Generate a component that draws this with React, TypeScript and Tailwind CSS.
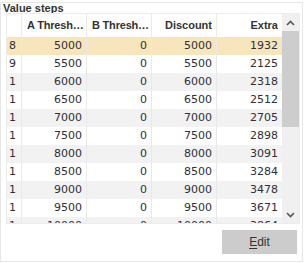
import React from "react"

const rows: [number, number, number, number, number][] = [
  [8, 5000, 0, 5000, 1932],
  [9, 5500, 0, 5500, 2125],
  [10, 6000, 0, 6000, 2318],
  [11, 6500, 0, 6500, 2512],
  [12, 7000, 0, 7000, 2705],
  [13, 7500, 0, 7500, 2898],
  [14, 8000, 0, 8000, 3091],
  [15, 8500, 0, 8500, 3284],
  [16, 9000, 0, 9000, 3478],
  [17, 9500, 0, 9500, 3671],
  [18, 10000, 0, 10000, 3864],
]

function Chevron({ up }: { up?: boolean }) {
  return (
    <svg width="9" height="6" viewBox="0 0 9 6" className="block">
      <path
        d={up ? "M1 5 L4.5 1.5 L8 5" : "M1 1 L4.5 4.5 L8 1"}
        fill="none"
        stroke="#555"
        strokeWidth="1.6"
      />
    </svg>
  )
}

export default function App() {
  return (
    <div className="w-[306px] h-[263px] bg-white pt-[2px] text-[#333] font-['Liberation_Sans',Arial,sans-serif]">
      <div className="w-[303px] h-[260px] border border-[#e6e6e6] flex flex-col">
        <div className="h-[10px] pl-[2px] text-[11px] leading-[11px] font-bold whitespace-nowrap">
          Value steps
        </div>

        <div className="ml-[5px] w-[294px] h-[211px] border border-[#ececec] flex overflow-hidden">
          <div className="w-[275px] h-full overflow-hidden">
            <div className="flex h-[23px] text-[11px] font-bold items-center">
              <div className="w-[15px] h-full border-r border-[#ebebeb]" />
              {["A Threshold", "B Threshold", "Discount", "Extra"].map((h, i) => (
                <div
                  key={h}
                  className={
                    "w-[65px] h-full flex items-center overflow-hidden " +
                    (i < 3 ? "border-r border-[#ebebeb] " : "") +
                    (i < 2 ? "pl-[5px] pr-[1px] tracking-[-0.2px]" : "justify-end pr-[4px]")
                  }
                >
                  <span className="truncate">{h}</span>
                </div>
              ))}
            </div>
            {rows.map((r, idx) => (
              <div
                key={idx}
                className={
                  "flex h-[18px] items-center text-[11px] font-['DejaVu_Sans',sans-serif] text-[#2e2e3a] " +
                  (idx === 0 ? "bg-[#f9e5bb]" : idx % 2 === 0 ? "bg-[#f2f2f2]" : "bg-white")
                }
              >
                <div className="w-[15px] h-full border-r border-[#e9e9e9] pl-[2px] flex items-center">
                  <span className="w-[7px] overflow-hidden whitespace-nowrap block">{r[0]}</span>
                </div>
                {r.slice(1).map((v, i) => (
                  <div
                    key={i}
                    className={
                      "w-[65px] h-full flex items-center justify-end pr-[4px] " +
                      (i < 3 ? "border-r border-[#e9e9e9]" : "")
                    }
                  >
                    {v}
                  </div>
                ))}
              </div>
            ))}
          </div>

          <div className="w-[17px] h-full bg-[#f0f0f0] flex flex-col items-center">
            <div className="h-[17px] flex items-center justify-center">
              <Chevron up />
            </div>
            <div className="w-[17px] h-[96px] bg-[#cdcdcd]" />
            <div className="flex-1" />
            <div className="h-[17px] flex items-center justify-center">
              <Chevron />
            </div>
          </div>
        </div>

        <div className="flex justify-end pr-[5px] mt-[6px]">
          <button className="w-[75px] h-[24px] bg-[#cccccc] text-[12px] text-[#333] font-['Liberation_Sans',Arial,sans-serif]">
            <span className="underline underline-offset-2">E</span>dit
          </button>
        </div>
      </div>
    </div>
  )
}
